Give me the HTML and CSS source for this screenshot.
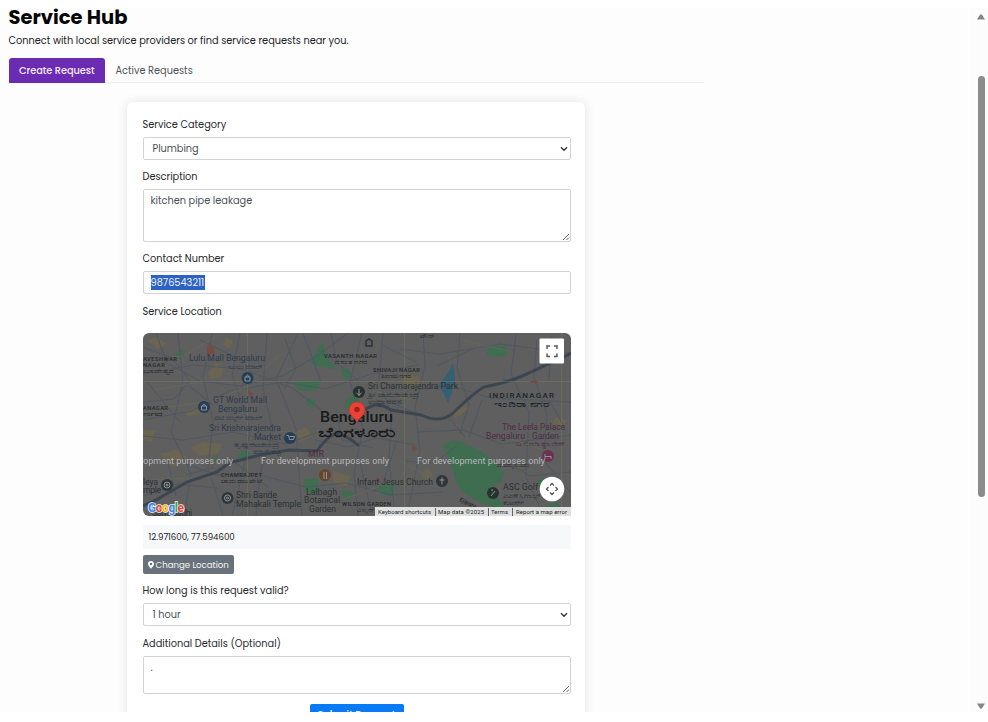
FILE: index.html
```html
<!DOCTYPE html>
<html lang="en">
<head>
<meta charset="utf-8">
<title>Service Hub</title>
<link rel="stylesheet" href="styles.css">
</head>
<body>
<div class="viewport">
  <main class="page">
    <h1 class="title">Service Hub</h1>
    <p class="subtitle">Connect with local service providers or find service requests near you.</p>
    <nav class="tabs">
      <a class="tab tab-active">Create Request</a>
      <a class="tab">Active Requests</a>
    </nav>
    <form class="card">
      <label class="label">Service Category</label>
      <div class="control select"><span>Plumbing</span>
        <svg class="chevron" viewBox="0 0 8 6"><path d="M1 1.3 4 4.2 7 1.3"/></svg></div>
      <label class="label">Description</label>
      <div class="control area area-tall"><span>kitchen pipe leakage</span>
        <svg class="grip" viewBox="0 0 8 8"><path d="M1 7 7 1M4.5 7 7 4.5"/></svg></div>
      <label class="label">Contact Number</label>
      <div class="control input"><span class="selected">9876543211</span></div>
      <label class="label">Service Location</label>
      <div class="map">
        <svg viewBox="143 333 428 183" width="428" height="183">
          <rect x="143" y="333" width="428" height="183" fill="#5f5f60"/>
          <g fill="#6b6552">
            <path d="M147 340l10-3 9 7-8 5zM208 373l8-10 7 5-2 9-10 2zM190 448l14-6 18 2-4 10-18 2zM160 454l18-5 10 10-16 8zM143 429l12 2-3 11-9-2zM403 374l16 2 4 12-18-2zM333 471l18 5-4 10-14-4zM296 432l10-5 7 9-14 6zM452 411l10-6 7 4-14 9zM555 417l12 3-5 8-9-3zM225 338l8 2-3 9-6-3zM184 411l16-3 8 5-20 3zM426 468l7 6-5 7-6-5z"/>
          </g>
          <g fill="#3f6d50">
            <path d="M322 343l7 18 8 8-21-3-6-5z"/><path d="M296 381h24l-2 9-16 1-7-4z"/>
            <path d="M340 370l8-2 4 8-6 4zM346 400l11-7 4 16-17-1zM308 398l8 2-3 8-6-3z"/>
            <path d="M488 346h19v8l-8 3-12-2z"/><path d="M175 355l7-6 2 6-5 3z"/>
            <path d="M443 446q12-10 24-1 10 3 23 13l14 14-2 9-12 6 14 19-5 2q-30-7-41-22-6-21-15-40z"/>
            <path d="M236 455l10-5 6 6-8 5zM213 456l5 1-3 5zM376 487l18-4v14l-13-3zM342 490l13 3-6 7-7-4zM538 480l10-3-2 10-9-2zM541 509l15-7 7 8-9 6h-15zM304 479h15l-2 14-12-2z"/>
          </g>
          <path d="M453 363l1 6 1 15-7 19-9-19 9-11z M502 378l7 2-3 4z" fill="#365f74"/>
          <g fill="none" stroke="#505862" stroke-width="1">
            <path d="M143 347l29 11 18 23-16 18-31 3M156 333l11 30 33 18 40 5 42-10 38-22 28-21M143 374l50-9 49 4 50 19 43 32M178 333l5 48-12 51 20 42-7 42M212 333l-9 44 10 45-5 46 15 48M143 420l49-9 37-20 55-9 41 7 53-17 40-7M240 333l-8 42 18 53-5 35-13 52M267 333l-4 55 10 44-12 38-5 46M298 333l-22 46 20 50 6 87M143 436l40 4 50-8 53 12 30-11M362 333l-12 49 13 46-9 46 4 42M383 333l-4 46 13 38-3 41 6 58M423 333l2 32-10 42 5 44-13 65M400 349l40 5 60-10 71 9M460 333l-3 35 12 37-9 28M516 335l-5 39 18 38-3 65 17 37M537 339l-3 38 13 38-4 45 28 33M415 390l37-4 39 12 80 4M417 432l46-2 39 14 69-9M143 463l36-2 37 14 36-2 54 14 40-4 45 12 52-3M143 496l34-12 40 4 27 21M315 440l33 7 28-9 40 7M406 461l28 2 23-17M500 458l30 18 41-4"/>
            <path d="M285 339l11 30-12 20M331 333l6 30 22 18M303 333l18 49M338 420l4 20 31 8M382 345l34 17M386 400l38 17M397 440l-14 43M360 462l12 53M449 418l16 19M482 400l-13 37M549 400l17 30M552 335l-3 45M475 348l-38 18M200 340l50 24M147 382l33 40M188 385l25 20M166 456l10 40M230 459l38 28M268 490l15 23M186 475l29-8"/>
          </g>
          <g fill="none" stroke="#6a6a5d" stroke-width=".8"><path d="M143 360l40-4 35-20M155 390l45-8 27-24M149 410l62-9 38-15M250 382l32-29M249 428l51 5M373 391l38 9M399 460l29 16M462 340l46 11M505 437l42 14M150 480l62-3M319 508l59-21"/></g>
          <path d="M143 506l13-6 31-18 30-10 12-9 31-8 29-5 28 1q12-17 20-17 10 1 22 12M365 410q12-10 26 0l30 5q20 9 32-2 23-22 31-26 21-4 36-10l54-25" fill="none" stroke="#3d4750" stroke-width="3"/>
          <path d="M143 381.5H571M247.500 333V516M404.500 333V516M561.500 333V516" stroke="#7b7965" stroke-width=".6" opacity=".8"/>
          <g fill="#7b4944"><path d="M207 346h7v8h-7zM248 390l6 4-5 3zM529 381h9l-2 3zM412 445l6 3-5 4zM376 477l5 3-3 3z"/></g>

          <g class="poi">
            <g fill="#263d55"><circle cx="247.500" cy="378" r="6"/><circle cx="204" cy="407" r="6"/><circle cx="290" cy="438" r="6"/></g>
            <g fill="#27332f"><circle cx="359" cy="392" r="6"/><circle cx="493" cy="493" r="6"/></g>
            <g fill="#303538"><circle cx="167" cy="485" r="6"/><circle cx="227.500" cy="498" r="6"/><circle cx="442" cy="481" r="6"/></g>
            <circle cx="325" cy="475" r="6" fill="#68452d"/><circle cx="548" cy="456" r="6" fill="#6b314f"/>
            <g fill="none" stroke="#8b969c" stroke-width="1"><path d="M245 377h5v4h-5zM246 377q1.500-4 3 0M201.500 406h5v4h-5zM202.500 406q1.500-4 3 0M286.500 435.500h2l1 4h4l1-3h-5M359 389v7M356.500 393l2.500 2 2.500-2M442 477.500v7M439.500 480h5M324 472v7M326.500 472v7M545 456.500h6M545 454v5M551 456v3M491 496l4-5M491 490h2"/><circle cx="167" cy="485" r="3"/><circle cx="167" cy="485" r="1"/><circle cx="227.500" cy="498" r="3"/><circle cx="227.500" cy="498" r="1"/></g>
            <path d="M366 346v-5l3-2 3 2v5z" fill="none" stroke="#293135" stroke-width="1.500"/>
          </g>

          <g class="t-blue">
            <text x="189" y="361" textLength="76" lengthAdjust="spacingAndGlyphs">Lulu Mall Bengaluru</text>
            <text x="228" y="369" class="small" textLength="35" lengthAdjust="spacingAndGlyphs">ಲುಲು ಮಾಲ್</text>
            <text x="213" y="403" textLength="54" lengthAdjust="spacingAndGlyphs">GT World Mall</text>
            <text x="218" y="412" textLength="39" lengthAdjust="spacingAndGlyphs">Bengaluru</text>
            <text x="214" y="420" class="small" textLength="48" lengthAdjust="spacingAndGlyphs">ಜಿಟಿ ವರ್ಲ್ಡ್ ಮಾಲ್</text>
            <text x="209" y="431" textLength="72" lengthAdjust="spacingAndGlyphs">Sri Krishnarajendra</text>
            <text x="254" y="440" textLength="27" lengthAdjust="spacingAndGlyphs">Market</text>
            <text x="234" y="447" class="small" textLength="45" lengthAdjust="spacingAndGlyphs">ಕೃಷ್ಣರಾಜೇಂದ್ರ</text>
            <text x="253" y="454" class="small" textLength="27" lengthAdjust="spacingAndGlyphs">ಮಾರುಕಟ್ಟೆ</text>
          </g>
          <g class="t-dark">
            <text x="368" y="389" textLength="90" lengthAdjust="spacingAndGlyphs">Sri Chamarajendra Park</text>
            <text x="368" y="397" class="small" textLength="50" lengthAdjust="spacingAndGlyphs">ಶ್ರೀ ಚಾಮರಾಜೇಂದ್ರ</text>
            <text x="368" y="404" class="small" textLength="34" lengthAdjust="spacingAndGlyphs">ಉದ್ಯಾನವನ</text>
            <text x="357" y="485" textLength="76" lengthAdjust="spacingAndGlyphs">Infant Jesus Church</text>
            <text x="306" y="495" textLength="31" lengthAdjust="spacingAndGlyphs">Lalbagh</text>
            <text x="304" y="503" textLength="36" lengthAdjust="spacingAndGlyphs">Botanical</text>
            <text x="309" y="512" textLength="27" lengthAdjust="spacingAndGlyphs">Garden</text>
            <text x="236" y="498" textLength="41" lengthAdjust="spacingAndGlyphs">Shri Bande</text>
            <text x="236" y="507" textLength="65" lengthAdjust="spacingAndGlyphs">Mahakali Temple</text>
            <text x="503" y="490" textLength="35" lengthAdjust="spacingAndGlyphs">ASC Golf</text>
            <text x="503" y="498" class="small" textLength="37" lengthAdjust="spacingAndGlyphs">ಎಎಸ್‌ಸಿ ಗಾಲ್ಫ್</text>
            <text x="503" y="505" class="small" textLength="21" lengthAdjust="spacingAndGlyphs">ಕೋರ್ಸ್</text>
            <text x="143" y="485" textLength="15">leya</text>
            <text x="143" y="493" textLength="18">mple</text>
            <text x="152" y="515.500" textLength="40">Satya Sadhi</text>
          </g>
          <g class="t-area">
            <text x="143" y="361" textLength="34">AVESHWAR</text><text x="143" y="367" textLength="22">NAGAR</text><text x="143" y="373" textLength="31" lengthAdjust="spacingAndGlyphs">ಬಸವೇಶ್ವರ</text>
            <text x="143" y="410" textLength="25">ANAGAR</text><text x="143" y="416" textLength="20" lengthAdjust="spacingAndGlyphs">ನಗರ</text>
            <text x="324" y="358" textLength="53">VASANTH NAGAR</text><text x="334" y="364" textLength="33" lengthAdjust="spacingAndGlyphs">ವಸಂತ ನಗರ</text>
            <text x="373" y="372" textLength="47">SHIVAJI NAGAR</text><text x="381" y="378" textLength="30" lengthAdjust="spacingAndGlyphs">ಶಿವಾಜಿನಗರ</text>
            <text x="221" y="477" textLength="41">CHAMRAJPET</text><text x="221" y="483" textLength="41" lengthAdjust="spacingAndGlyphs">ಚಾಮರಾಜಪೇಟೆ</text>
            <text x="342" y="506" textLength="49">WILSON GARDEN</text><text x="357" y="512" textLength="17" lengthAdjust="spacingAndGlyphs">ವಿಲ್ಸನ್</text>
            <text x="420" y="338" textLength="15" lengthAdjust="spacingAndGlyphs">ಟೌನ್</text>
            <text x="497" y="467" textLength="32" lengthAdjust="spacingAndGlyphs">ದೊಮ್ಮಲೂರು</text>
            <text x="459" y="501" transform="rotate(24 459 501)" textLength="18">Ejipura</text>
          </g>
          <g class="t-pink">
            <text x="502" y="430" textLength="63" lengthAdjust="spacingAndGlyphs">The Leela Palace</text>
            <text x="486" y="439" textLength="39" lengthAdjust="spacingAndGlyphs">Bengaluru</text><text x="532" y="439" textLength="27" lengthAdjust="spacingAndGlyphs">Garden</text>
            <text x="516" y="446" class="small" textLength="49" lengthAdjust="spacingAndGlyphs">ದಿ ಲೀಲಾ ಪ್ಯಾಲೇಸ್</text>
            <text x="308" y="457" textLength="16">MTR</text>
          </g>
          <g class="t-district"><text x="489" y="398" textLength="65">INDIRANAGAR</text><text x="494" y="407" textLength="55" lengthAdjust="spacingAndGlyphs">ಇಂದಿರಾ ನಗರ</text></g>
          <g class="t-city"><text x="320" y="422" textLength="73" lengthAdjust="spacingAndGlyphs">Bengaluru</text><text x="318" y="437" class="kn" textLength="77" lengthAdjust="spacingAndGlyphs">ಬೆಂಗಳೂರು</text></g>
          <path d="M357 423c-1-5-8-7-8-13a8 8 0 0 1 16 0c0 6-7 8-8 13z" fill="#ea4335" stroke="#b72f27" stroke-width=".6"/><circle cx="357" cy="409.500" r="2.800" fill="#9d251f"/>
          <g class="t-dev"><text x="143" y="464" textLength="90">opment purposes only</text><text x="261" y="464" textLength="128">For development purposes only</text><text x="417" y="464" textLength="128">For development purposes only</text></g>
          <g class="t-google"><text x="148" y="512" textLength="36"><tspan fill="#4285f4">G</tspan><tspan fill="#ea4335">o</tspan><tspan fill="#fbbc04">o</tspan><tspan fill="#4285f4">g</tspan><tspan fill="#34a853">l</tspan><tspan fill="#ea4335">e</tspan></text></g>
          <path d="M375 507h196v9H375z" fill="#dfe0e0"/><path d="M435.500 508v8M488.500 508v8M512.500 508v8" stroke="#666"/>
          <g class="t-terms"><text x="378" y="514.300" textLength="53">Keyboard shortcuts</text><text x="438" y="514.300" textLength="46">Map data ©2025</text><text x="491" y="514.300" textLength="17">Terms</text><text x="516" y="514.300" textLength="51">Report a map error</text></g>
          <rect x="539.500" y="338.500" width="24.500" height="25" rx="1" fill="#fff"/>
          <path d="M550 346h-3v3M554 346h3v3M550 356.500h-3v-3M554 356.500h3v-3" fill="none" stroke="#555" stroke-width="1.500"/>
          <circle cx="552" cy="489" r="12.300" fill="#fff"/>
          <path d="M550 485.500l2-2 2 2M550 492.500l2 2 2-2M548.500 487l-2 2 2 2M555.500 487l2 2-2 2" fill="none" stroke="#555" stroke-width="1.300"/>
        </svg>
      </div>
      <div class="coords"><span>12.971600, 77.594600</span></div>
      <div class="change"><svg viewBox="0 0 6 8"><path fill-rule="evenodd" d="M3 8C2.400 6.500 0 5 0 3a3 3 0 0 1 6 0c0 2-2.400 3.500-3 5zM3 1.800a1.200 1.200 0 1 0 0 2.400 1.200 1.200 0 0 0 0-2.400z"/></svg><span>Change Location</span></div>
      <label class="label label-loose">How long is this request valid?</label>
      <div class="control select"><span>1 hour</span>
        <svg class="chevron" viewBox="0 0 8 6"><path d="M1 1.300 4 4.200 7 1.300"/></svg></div>
      <label class="label label-loose">Additional Details (Optional)</label>
      <div class="control area area-short"><span>.</span>
        <svg class="grip" viewBox="0 0 8 8"><path d="M1 7 7 1M4.500 7 7 4.500"/></svg></div>
      <div class="submit">Submit Request</div>
    </form>
  </main>
  <aside class="scrollbar">
    <svg viewBox="0 0 8 6"><path d="M0 5.500 3 .8q1-1 2 0L8 5.500z"/></svg>
    <div class="thumb"></div>
    <svg class="down" viewBox="0 0 8 6"><path d="M0 .5 3 5.200q1 1 2 0L8 .5z"/></svg>
  </aside>
</div>
</body>
</html>
```
FILE: styles.css
```css
* { box-sizing: border-box; }
body { margin: 0; background: #fff; color: #202124; font: 400 9.77px/16px Poppins, Inter, "Open Sans", sans-serif; overflow: hidden; }
.viewport { height: 712px; overflow: hidden; display: flex; justify-content: space-between; background: #fdfdfd; border-top: 8px solid #fff; }
.page { width: 704px; padding-left: 8.5px; }
.title { margin: -3px 0 0; font-size: 19.5px; line-height: 26px; font-weight: 700; color: #050505; }
.subtitle { margin: 2px 0 0; line-height: 16px; }
.tabs { display: flex; height: 25px; margin-top: 9px; box-shadow: inset 0 -1px #ebedef; }
.tab { padding: 0 11px; line-height: 25px; color: #4e5358; }
.tab-active { width: 96px; padding: 0 0 0 10.5px; background: #6c2bb3; color: #f5edff; border-radius: 3px 3px 0 0; font-weight: 500; letter-spacing: -.05px; }
.card { width: 458px; height: 640px; margin: 19px 0 0 118.5px; padding: 15px 14.500px 0 15.5px; background: #fff; border-radius: 6px; box-shadow: 0 0 11px rgba(0,0,0,.11); display: flex; flex-direction: column; align-items: flex-start; }
.label { height: 16px; margin-bottom: 4px; color: #25282c; }
.control { width: 428px; flex: none; border: 1px solid #d1d4d7; border-radius: 2px; background: #fff; color: #495057; position: relative; margin-bottom: 9px; }
.label-loose + .control { margin-bottom: 10px; }
.select { height: 23px; line-height: 22px; padding-left: 9px; }
.chevron { position: absolute; right: 2px; top: 8px; width: 8px; height: 6px; fill: none; stroke: #333; stroke-width: 1.4; }
.area { padding: 3px 7px; }
.area-tall { height: 53px; }
.area-short { height: 38px; }
.grip { position: absolute; right: 0; bottom: 0; width: 8px; height: 8px; fill: none; stroke: #555; stroke-width: .9; }
.input { height: 23px; padding: 3px 7px; margin-bottom: 10px; }
.selected { display: block; width: 54px; height: 15px; line-height: 16px; background: #2e62c2; color: #eaf2ff; white-space: nowrap; }
.map { width: 428px; height: 183px; flex: none; margin: 9px 0; overflow: hidden; border-radius: 6px 6px 0 6px; }
.map svg { display: block; font-family: Roboto, "Noto Sans", sans-serif; }
.t-blue { fill: #2d3b4c; font-size: 8.6px; }
.t-dark { fill: #2b3233; font-size: 8.6px; }
.t-pink { fill: #4e2d42; font-size: 8.6px; }
.small { font-size: 6.5px; }
.t-area { fill: #252729; font-size: 5.8px; font-weight: 500; }
.t-district { fill: #202426; font-size: 8px; font-weight: 500; }
.t-city { fill: #17191a; font-size: 15.5px; font-weight: 500; }
.kn { font-size: 13px; stroke: #17191a; stroke-width: .4px; }
.t-dev { fill: #b9b9b9; font-size: 9px; }
.t-google { font-size: 12px; font-weight: 700; stroke: #eee; stroke-width: 1.5px; paint-order: stroke; }
.t-terms { fill: #202020; font-size: 6px; }
.coords { width: 428px; height: 24px; flex: none; padding-left: 6px; line-height: 24px; font-size: 8.6px; background: #f7f8fa; margin-bottom: 6px; }
.change { width: 91px; height: 19px; flex: none; display: flex; align-items: center; gap: 2px; padding-left: 5px; margin-bottom: 9px; background: #69717a; border-radius: 2px; color: #f3f5f6; font-size: 8.6px; white-space: nowrap; }
.change svg { width: 6px; height: 8px; fill: #fff; }
.submit { width: 94px; height: 26px; flex: none; align-self: center; background: #087af6; color: #fff; text-align: center; line-height: 21px; border-radius: 2px; font-weight: 500; }
.scrollbar { width: 18px; padding: 6px 4px 3px 8px; display: flex; flex-direction: column; align-items: center; background: #fcfcfc; }
.scrollbar svg { width: 8px; height: 6px; fill: #858585; }
.thumb { width: 7px; height: 421px; margin-top: 56px; border-radius: 4px; background: #8b8b8b; }
.scrollbar .down { margin-top: auto; }
```
